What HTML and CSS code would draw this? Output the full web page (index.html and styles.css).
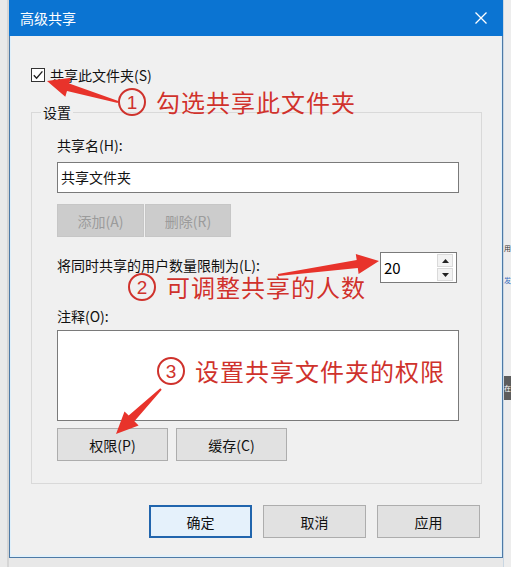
FILE: index.html
```html
<!DOCTYPE html>
<html lang="zh-CN">
<head>
<meta charset="utf-8">
<title>高级共享</title>
<link rel="stylesheet" href="styles.css">
</head>
<body>
<div class="screen">
  <div class="bg-left"></div>
  <div class="window">
    <div class="titlebar">
      <span class="title">高级共享</span>
      <svg class="close" width="14" height="14" viewBox="0 0 14 14"><path d="M1.5 1.5 L12.5 12.5 M12.5 1.5 L1.5 12.5" stroke="#fff" stroke-width="1.3" fill="none"/></svg>
    </div>
    <div class="content">
      <div class="share-check">
        <span class="checkbox"><svg width="12" height="12" viewBox="0 0 12 12"><path d="M1.8 6.2 L4.6 9.2 L10.4 2.4" stroke="#222" stroke-width="1.4" fill="none"/></svg></span>
        <span>共享此文件夹(S)</span>
      </div>
      <fieldset class="group">
        <legend>设置</legend>
        <div class="group-inner">
          <div class="field-label">共享名(H):</div>
          <div class="textbox">共享文件夹</div>
          <div class="btn-row tight">
            <span class="btn disabled add">添加(A)</span>
            <span class="btn disabled del">删除(R)</span>
          </div>
          <div class="limit-row">
            <span class="limit-label">将同时共享的用户数量限制为(L):</span>
            <div class="spin">
              <span class="spin-value">20</span>
              <div class="spin-btns">
                <span class="spin-btn"><svg width="7" height="4" viewBox="0 0 7 4"><path d="M0 4 L3.5 0 L7 4 Z" fill="#222"/></svg></span>
                <span class="spin-btn"><svg width="7" height="4" viewBox="0 0 7 4"><path d="M0 0 L3.5 4 L7 0 Z" fill="#222"/></svg></span>
              </div>
            </div>
          </div>
          <div class="field-label comment-label">注释(O):</div>
          <div class="textarea"></div>
          <div class="btn-row wide">
            <span class="btn perm">权限(P)</span>
            <span class="btn perm">缓存(C)</span>
          </div>
        </div>
      </fieldset>
      <div class="dialog-buttons">
        <span class="btn dlg default">确定</span>
        <span class="btn dlg">取消</span>
        <span class="btn dlg">应用</span>
      </div>
    </div>
  </div>
  <div class="bg-right">
    <span class="frag f1">用</span>
    <span class="frag f2">发</span>
    <span class="frag f3">在</span>
  </div>

  <svg class="arrows" width="511" height="567" viewBox="0 0 511 567">
    <polygon fill="#e8332b" points="118.3,101.0 69.2,83.4 70.9,77.7 47,81 65.3,96.8 67.0,91.1 117.7,103.0"/>
    <polygon fill="#e8332b" points="278.1,276.0 357.8,268.0 358.6,273.9 379,261 355.8,254.1 356.7,260.1 277.9,274.0"/>
    <polygon fill="#e8332b" points="160.3,388.3 128.7,415.6 124.5,411.4 116,434 138.6,425.5 134.4,421.3 161.7,389.7"/>
  </svg>
  <div class="note n1"><span class="num">1</span><span class="note-text">勾选共享此文件夹</span></div>
  <div class="note n2"><span class="num">2</span><span class="note-text">可调整共享的人数</span></div>
  <div class="note n3"><span class="num">3</span><span class="note-text">设置共享文件夹的权限</span></div>
</div>
</body>
</html>
```
FILE: styles.css
```css
html, body {
  margin: 0;
  padding: 0;
}
body {
  width: 511px;
  height: 567px;
  overflow: hidden;
  background: #e8e8e8;
  font-family: "Noto Sans CJK SC", "Microsoft YaHei", sans-serif;
  font-size: 14px;
  color: #111;
}
.screen {
  position: relative;
  display: flex;
  align-items: flex-start;
  width: 511px;
  height: 567px;
}
.bg-left {
  width: 9px;
  height: 567px;
  background: #e9e9e9;
  box-shadow: inset -2px 0 0 #d6d6d6;
}
.window {
  width: 494px;
  height: 558px;
  box-sizing: border-box;
  background: #f0f0f0;
  border: 1px solid #4e7aa6;
  border-top: none;
  box-shadow: inset 1px 0 0 #dff0fb, inset -1px 0 0 #dff0fb, inset 0 -2px 0 #e3f1fa;
  display: flex;
  flex-direction: column;
}
.titlebar {
  height: 36px;
  margin: 0 -1px;
  background: #0b74d2;
  color: #fff;
  display: flex;
  align-items: center;
  justify-content: space-between;
  padding: 0 15px 0 11px;
  flex-shrink: 0;
}
.title {
  font-size: 14px;
  line-height: 18px;
}
.content {
  padding: 30px 0 0 21px;
  display: flex;
  flex-direction: column;
}
.share-check {
  display: flex;
  align-items: center;
  gap: 5px;
  height: 18px;
  line-height: 18px;
}
.checkbox {
  width: 14px;
  height: 14px;
  box-sizing: border-box;
  border: 1px solid #333;
  background: #fff;
  display: flex;
  align-items: center;
  justify-content: center;
}
.group {
  margin: 19px 0 0 0;
  width: 451px;
  box-sizing: border-box;
  border: 1px solid #d9d9d9;
  padding: 0 0 0 9px;
  min-width: 0;
}
.group legend {
  padding: 0 2px;
  line-height: 18px;
  font-size: 14px;
}
.group-inner {
  padding: 15px 0 22px 16px;
  display: flex;
  flex-direction: column;
}
.field-label {
  line-height: 18px;
  height: 18px;
}
.textbox {
  margin-top: 8px;
  width: 402px;
  height: 31px;
  box-sizing: border-box;
  border: 1px solid #7a7a7a;
  background: #fff;
  padding-left: 3px;
  line-height: 29px;
}
.btn-row {
  display: flex;
}
.btn-row.tight {
  margin-top: 11px;
  gap: 1px;
}
.btn {
  display: flex;
  align-items: center;
  justify-content: center;
  box-sizing: border-box;
  height: 33px;
  border: 1px solid #adadad;
  background: #e1e1e1;
  color: #111;
  font-size: 14px;
}
.btn.disabled {
  background: #cccccc;
  border-color: #c6c6c6;
  color: #9b9b9b;
}
.btn.add { width: 87px; }
.btn.del { width: 86px; }
.limit-row {
  margin-top: 15px;
  width: 400px;
  display: flex;
  align-items: center;
  justify-content: space-between;
}
.limit-label {
  line-height: 16px;
  margin-top: -5px;
}
.spin {
  width: 77px;
  height: 31px;
  box-sizing: border-box;
  border: 1px solid #7a7a7a;
  background: #fff;
  display: flex;
  justify-content: space-between;
  padding: 1px 3px 1px 3px;
}
.spin-value {
  font-size: 15px;
  line-height: 27px;
  color: #000;
}
.spin-btns {
  width: 16px;
  display: flex;
  flex-direction: column;
  gap: 1px;
}
.spin-btn {
  flex: 1;
  background: #f3f3f3;
  border: 1px solid #dadada;
  display: flex;
  align-items: center;
  justify-content: center;
}
.comment-label {
  margin-top: 24px;
}
.textarea {
  margin-top: 5px;
  width: 402px;
  height: 91px;
  box-sizing: border-box;
  border: 1px solid #7a7a7a;
  background: #fff;
}
.btn-row.wide {
  margin-top: 7px;
  gap: 8px;
}
.btn.perm { width: 111px; }
.dialog-buttons {
  margin: 21px 22px 0 0;
  display: flex;
  justify-content: flex-end;
  gap: 11px;
}
.btn.dlg {
  width: 103px;
}
.btn.default {
  border: 2px solid #2165ad;
  background: #e5f1fb;
}
.bg-right {
  position: relative;
  width: 8px;
  height: 567px;
  background: #ededed;
  overflow: hidden;
  box-shadow: inset 1px 0 0 #c9d6e2;
}
.frag {
  position: absolute;
  left: 1px;
  font-size: 7px;
  line-height: 8px;
}
.f1 { top: 244px; color: #333; }
.f2 { top: 276px; color: #3b6fc0; }
.f3 { top: 376px; color: #fff; background: #5d5d5d; padding: 8px 0; }
.arrows {
  position: absolute;
  left: 0;
  top: 0;
  pointer-events: none;
}
.note {
  position: absolute;
  display: flex;
  align-items: center;
  gap: 10px;
  height: 28px;
  color: #cf322c;
}
.n1 { left: 118px; top: 88px; }
.n2 { left: 128px; top: 273px; }
.n3 { left: 157px; top: 357px; }
.num {
  width: 28px;
  height: 28px;
  box-sizing: border-box;
  border: 2.5px solid #cf322c;
  border-radius: 50%;
  display: flex;
  align-items: center;
  justify-content: center;
  font-size: 19px;
  line-height: 1;
  font-family: "Liberation Sans", "Noto Sans", sans-serif;
}
.note-text {
  font-size: 24px;
  line-height: 22px;
  letter-spacing: 1px;
  text-shadow: 0 0 1px #fff;
}
```
